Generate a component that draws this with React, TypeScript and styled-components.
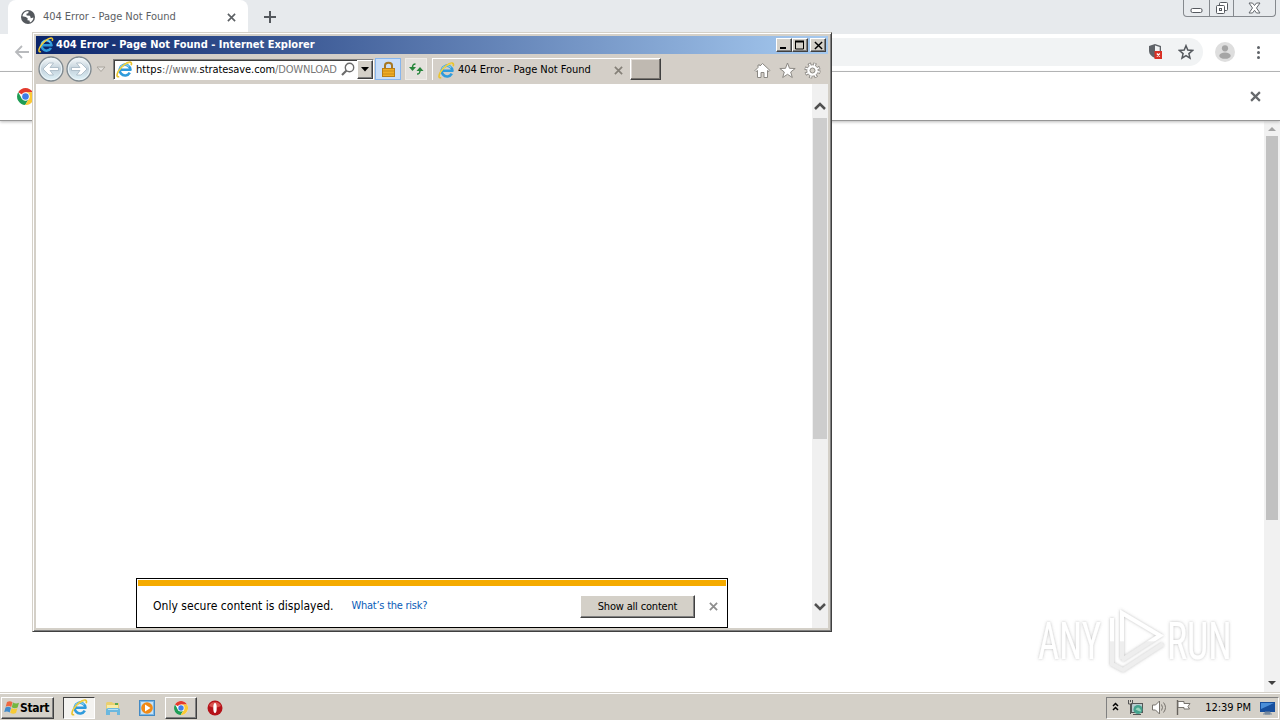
import type { ReactNode } from 'react';
import styled, { createGlobalStyle, css } from 'styled-components';

const GlobalStyle = createGlobalStyle`
  * {
    box-sizing: border-box;
  }

  body {
    margin: 0;
    overflow: hidden;
    font-family: 'DejaVu Sans Condensed', 'DejaVu Sans', sans-serif;
    font-stretch: condensed;
    font-size: 11px;
    color: #000;
  }

  svg {
    display: block;
    flex: none;
  }
`;

const raised = css`
  border: 1px solid;
  border-color: #fff #404040 #404040 #fff;
  box-shadow: inset -1px -1px 0 #808080;
`;

type TextProps = {
  size?: number;
  color?: string;
  spacing?: number;
  bold?: boolean;
};

const Text = styled.span.withConfig({
  shouldForwardProp: (prop) => !['size', 'color', 'spacing', 'bold'].includes(prop),
})<TextProps>`
  font-size: ${({ size = 11 }) => size}px;
  font-weight: ${({ bold }) => (bold ? 'bold' : 'normal')};
  letter-spacing: ${({ spacing = 0 }) => spacing}px;
  color: ${({ color = '#000' }) => color};
  line-height: 16px;
  white-space: nowrap;
`;

const Desktop = styled.div`
  position: relative;
  width: 1280px;
  height: 720px;
  display: flex;
  flex-direction: column;
  overflow: hidden;
  background: #fff;
`;

const Chrome = {
  Window: styled.main`
    flex: 1;
    display: flex;
    flex-direction: column;
    min-height: 0;
  `,
  TabStrip: styled.div`
    height: 34px;
    display: flex;
    align-items: flex-start;
    padding-left: 8px;
    background: #e7eaed;
  `,
  Tab: styled.div`
    width: 240px;
    height: 34px;
    display: flex;
    align-items: center;
    padding: 0 12px 0 13px;
    border-radius: 8px 8px 0 0;
    background: #fff;

    ${Text} {
      flex: 1;
      margin-left: 8px;
    }
  `,
  NewTab: styled.div`
    padding: 10px 15px;
  `,
  Controls: styled.div`
    width: 93px;
    height: 17px;
    display: flex;
    margin-left: auto;
    margin-right: 4px;
    border: 1px solid #85898e;
    border-top: 0;
    border-radius: 0 0 4px 4px;
  `,
  Control: styled.div<{ width: number }>`
    width: ${({ width }) => width}px;
    display: flex;
    align-items: center;
    justify-content: center;

    & + & {
      border-left: 1px solid #85898e;
    }
  `,
  Toolbar: styled.div`
    height: 38px;
    display: flex;
    align-items: center;
    padding: 0 14px 2px 14px;
    border-bottom: 1px solid #b0b1b3;
    background: #fff;
  `,
  Omnibox: styled.div`
    flex: 1;
    height: 28px;
    display: flex;
    align-items: center;
    justify-content: flex-end;
    gap: 15px;
    margin: 0 12px 0 80px;
    padding-right: 9px;
    border-radius: 14px;
    background: #f1f3f4;
  `,
  Avatar: styled.div`
    margin-right: 14px;
  `,
  InfoBar: styled.div`
    height: 49px;
    display: flex;
    align-items: center;
    justify-content: space-between;
    padding: 0 19px 0 17px;
    border-bottom: 1px solid #969696;
    box-shadow: 0 1px 3px #bbb;
    z-index: 1;
  `,
  Page: styled.div`
    flex: 1;
    display: flex;
    justify-content: flex-end;
    background: #fff;
  `,
  Scrollbar: styled.div`
    width: 16px;
    display: flex;
    flex-direction: column;
    align-items: center;
    padding: 5px 0 6px;
    background: #f1f1f1;
  `,
  Thumb: styled.div`
    width: 12px;
    height: 384px;
    margin: 5px 0 auto;
    background: #c1c1c1;
  `,
};

const Explorer = {
  Window: styled.section`
    position: absolute;
    left: 32px;
    top: 32px;
    width: 800px;
    height: 600px;
    display: flex;
    flex-direction: column;
    padding: 2px;
    border: 1px solid;
    border-color: #d4d0c8 #404040 #404040 #d4d0c8;
    box-shadow: inset 1px 1px 0 #fff, inset -1px -1px 0 #808080;
    background: #d4d0c8;
    z-index: 2;
  `,
  Frame: styled.div`
    flex: 1;
    display: flex;
    flex-direction: column;
    margin: 1px;
    min-height: 0;
  `,
  TitleBar: styled.header`
    height: 18px;
    display: flex;
    align-items: center;
    padding: 0 2px;
    background: linear-gradient(90deg, #0a246a, #a6caf0);

    ${Text} {
      flex: 1;
      margin-left: 2px;
    }
  `,
  TitleButton: styled.div<{ gap?: boolean }>`
    width: 16px;
    height: 14px;
    display: flex;
    align-items: center;
    justify-content: center;
    margin-left: ${({ gap }) => (gap ? 2 : 0)}px;
    background: #d4d0c8;
    ${raised}
  `,
  Toolbar: styled.div`
    height: 30px;
    display: flex;
    align-items: center;
    background: #d4cfc8;
  `,
  Navigation: styled.div`
    display: flex;
    align-items: center;
    padding-left: 1px;
  `,
  Address: styled.div`
    width: 261px;
    height: 21px;
    display: flex;
    align-items: center;
    margin-left: 6px;
    padding-left: 2px;
    border: 1px solid;
    border-color: #808080 #fff #fff #808080;
    box-shadow: inset 1px 1px 0 #404040;
    background: #fff;
  `,
  Url: styled.div`
    width: 202px;
    display: flex;
    margin-left: 3px;
    padding-top: 1px;
    overflow: hidden;
  `,
  Dropdown: styled.div`
    width: 16px;
    height: 19px;
    display: flex;
    align-items: center;
    justify-content: center;
    margin-left: auto;
    background: #d4d0c8;
    ${raised}
  `,
  Tool: styled.div<{ active?: boolean }>`
    width: ${({ active }) => (active ? 26 : 22)}px;
    height: 22px;
    display: flex;
    align-items: center;
    justify-content: center;
    margin-left: ${({ active }) => (active ? 1 : 4)}px;
    border: 1px solid ${({ active }) => (active ? '#86b5ee' : '#efece8')};
    background: ${({ active }) => (active ? '#c9def8' : '#e4e1dd')};
  `,
  Tab: styled.div`
    width: 198px;
    height: 22px;
    display: flex;
    align-items: center;
    margin-left: 5px;
    padding: 1px 7px 0 5px;
    border: 1px solid #fff;
    border-width: 1px 0 0 1px;

    ${Text} {
      flex: 1;
      margin-left: 3px;
    }
  `,
  NewTab: styled.div`
    width: 31px;
    height: 22px;
    border: 1px solid;
    border-color: #fff #404040 #404040 #fff;
    box-shadow: inset -1px -1px 0 #77736e, inset 1px 1px 0 #ded9d4;
    background: #bfb9b1;
  `,
  Commands: styled.div`
    display: flex;
    gap: 8px;
    margin-left: auto;
    padding: 3px 7px 0 0;
  `,
  Body: styled.div`
    flex: 1;
    display: flex;
    justify-content: flex-end;
    min-height: 0;
    background: #fff;
  `,
  Scrollbar: styled.div`
    width: 16px;
    display: flex;
    flex-direction: column;
    align-items: center;
    padding: 17px 0;
    background: #f0f0f0;
  `,
  Thumb: styled.div`
    width: 14px;
    height: 321px;
    margin: 8px 0 auto;
    background: #cdcdcd;
  `,
};

const Notice = {
  Bar: styled.aside`
    width: 592px;
    height: 50px;
    align-self: flex-end;
    display: flex;
    flex-direction: column;
    margin-right: 84px;
    padding: 1px;
    border: 1px solid #000;
    background: #fff;
  `,
  Stripe: styled.div`
    height: 6px;
    background: #f5ab00;
  `,
  Content: styled.div`
    flex: 1;
    display: flex;
    align-items: center;
    padding: 0 8px 0 15px;
  `,
  Link: styled.a`
    display: flex;
    margin-left: 18px;
  `,
  Button: styled.button`
    width: 115px;
    height: 23px;
    display: flex;
    align-items: center;
    justify-content: center;
    margin: 1px 14px 0 auto;
    padding: 1px 0 0;
    font: inherit;
    background: #d4d0c8;
    ${raised}
  `,
};

const Taskbar = {
  Bar: styled.footer`
    height: 28px;
    display: flex;
    align-items: center;
    padding-top: 2px;
    border-top: 1px solid #d4d0c8;
    box-shadow: inset 0 1px 0 #fff;
    background: #d4d0c8;
  `,
  Start: styled.div`
    width: 53px;
    height: 22px;
    display: flex;
    align-items: center;
    margin: 0 9px 0 1px;
    padding-left: 2px;
    ${raised}
  `,
  Item: styled.div<{ look?: 'pressed' | 'raised' }>`
    width: 32px;
    height: 22px;
    display: flex;
    align-items: center;
    justify-content: center;
    margin-right: 2px;
    ${({ look }) => look === 'raised' && raised}
    ${({ look }) =>
      look === 'pressed' &&
      css`
        border: 1px solid;
        border-color: #404040 #fff #fff #404040;
        background: #f4f3f0;
      `}
  `,
  Tray: styled.div`
    width: 173px;
    height: 22px;
    display: flex;
    align-items: center;
    margin: 0 1px 0 auto;
    padding: 0 2px 0 4px;
    border: 1px solid;
    border-color: #808080 #fff #fff #808080;
  `,
  TrayIcons: styled.div`
    display: flex;
    align-items: center;
    gap: 7px;
    margin-right: auto;
  `,
};

const Watermark = styled.div`
  position: absolute;
  left: 1032px;
  top: 604px;
  z-index: 3;
`;

type IconProps = {
  width: number;
  height?: number;
  box?: string;
  children: ReactNode;
};

const Icon = ({ width, height = width, box, children }: IconProps) => (
  <svg width={width} height={height} viewBox={box ?? `0 0 ${width} ${height}`} fill="none">
    {children}
  </svg>
);

const Cross = ({ size, color, weight = 2 }: { size: number; color: string; weight?: number }) => (
  <Icon width={size} box="0 0 10 10">
    <path d="M1 1l8 8M9 1l-8 8" stroke={color} strokeWidth={weight} />
  </Icon>
);

const IeLogo = ({ size = 17 }: { size?: number }) => (
  <Icon width={size} box="0 0 18 18">
    <path
      d="M14.6 12.4a5.700 5.700 0 1 1 .7-3.100H5.200"
      stroke="#2f9bdc"
      strokeWidth="2.800"
      strokeLinejoin="round"
    />
    <path d="M4 8.200A5.600 5.600 0 0 1 13.800 6" stroke="#7fd2f6" strokeWidth="1.200" />
    <path
      d="M3.400 16.400C.8 17.600.2 14.900 2.400 11 5.200 6 11.600.8 15 1.200c1.500.2 1.700 1.600 1 3.300"
      stroke="#e9c32c"
      strokeWidth="1.700"
    />
    <path d="M2.200 12C5 6.500 11 1.800 14.800 1.600" stroke="#fbe66a" strokeWidth=".6" />
  </Icon>
);

const ChromeLogo = ({ size }: { size: number }) => (
  <Icon width={size} box="0 0 16 16">
    <circle cx="8" cy="8" r="8" fill="#fff" />
    <path d="M8 8L1.1 4A8 8 0 0 1 14.9 4L8 4.2z" fill="#e33b2e" />
    <path d="M1.1 4A8 8 0 0 0 7.7 16L11.3 9.9 8 11.6 4.7 10z" fill="#1f9d55" />
    <path d="M14.9 4A8 8 0 0 1 7.7 16l3.6-6.1L11.5 6 8 4z" fill="#fbc934" />
    <circle cx="8" cy="8" r="4" fill="#fff" />
    <circle cx="8" cy="8" r="3.1" fill="#3f7ee8" />
  </Icon>
);

const NavArrow = ({ forward }: { forward?: boolean }) => (
  <Icon width={28} height={27}>
    <defs>
      <linearGradient id="orb" x2="0" y2="1">
        <stop stopColor="#fafcfd" />
        <stop offset=".5" stopColor="#c2d1db" />
        <stop offset="1" stopColor="#e2f5fb" />
      </linearGradient>
    </defs>
    <circle cx="14" cy="13" r="12" fill="url(#orb)" stroke="#7f898f" strokeWidth="1.3" />
    <circle cx="14" cy="13" r="10.7" stroke="#edf5f8" />
    <path
      transform={forward ? undefined : 'matrix(-1 0 0 1 28 0)'}
      d="M6.500 11.500h8.500l-3.500-4.500h4.500l6 6-6 6h-4.500l3.500-4.500h-8.500z"
      fill="#fff"
      stroke="#a3b5c1"
      strokeWidth=".8"
    />
  </Icon>
);

const ChromeWindow = () => (
  <Chrome.Window>
    <Chrome.TabStrip>
      <Chrome.Tab>
        <Icon width={14} box="0 0 16 16">
          <circle cx="8" cy="8" r="8" fill="#54585d" />
          <path d="M8.8 1.6l-.6 2-2.1.6.4 2.1 3.8.3.9 2.7 3-.7c-.2 2.6-1.6 4.8-4 5.6l-.5-2.2-2.300-.4.2-2.3-2.1-1.4L1.7 7c.5-3 3.2-5.9 7.1-5.4z" fill="#fff" />
        </Icon>
        <Text color="#5c6064" spacing={-0.04}>404 Error - Page Not Found</Text>
        <Cross size={9} color="#5c6064" weight={1.8} />
      </Chrome.Tab>
      <Chrome.NewTab>
        <Icon width={14}>
          <path d="M7 1v12M1 7h12" stroke="#54585d" strokeWidth="2" />
        </Icon>
      </Chrome.NewTab>
      <Chrome.Controls>
        <Chrome.Control width={25}>
          <Icon width={13} height={15}>
            <rect x="1" y="7.500" width="11" height="4" rx="1.5" fill="#fff" stroke="#55595f" />
          </Icon>
        </Chrome.Control>
        <Chrome.Control width={25}>
          <Icon width={14} height={14}>
            <rect x="4.5" y="1.5" width="8" height="8" rx="1" fill="#fff" stroke="#55595f" />
            <rect x="1.5" y="4.5" width="8" height="8" rx="1" fill="#fff" stroke="#55595f" />
            <rect x="4.5" y="7.5" width="2" height="2" stroke="#55595f" />
          </Icon>
        </Chrome.Control>
        <Chrome.Control width={42}>
          <Icon width={13} height={12}>
            <path d="M1 1h3.5l2 2.5 2-2.5H12L8.5 6l3.5 5H8.5l-2-2.7-2 2.7H1l3.5-5z" fill="#fff" stroke="#64686d" />
          </Icon>
        </Chrome.Control>
      </Chrome.Controls>
    </Chrome.TabStrip>

    <Chrome.Toolbar>
      <Icon width={16}>
        <path d="M15 8H2M8 2L2 8l6 6" stroke="#b8babd" strokeWidth="1.8" />
      </Icon>
      <Chrome.Omnibox>
        <Icon width={15} height={17}>
          <path d="M7 1l6 2v5c0 3-2.300 5.500-6 7-3.700-1.500-6-4-6-7V3z" fill="#5f6368" />
          <path d="M7 2.400l4.700 1.500V8H7z" fill="#f1f3f4" />
          <rect x="6.500" y="8" width="7.500" height="8" fill="#d93025" />
          <path d="M8.800 10.500l3 3m0-3l-3 3" stroke="#fff" strokeWidth="1.200" />
        </Icon>
        <Icon width={16}>
          <path
            d="M8 1.700l1.800 4.400 4.700.4-3.600 3.100 1.100 4.600L8 11.700l-4 2.500 1.100-4.600-3.600-3.100 4.700-.4z"
            stroke="#54585d"
            strokeWidth="1.500"
          />
        </Icon>
      </Chrome.Omnibox>
      <Chrome.Avatar>
        <Icon width={20}>
          <circle cx="10" cy="10" r="10" fill="#dedede" />
          <circle cx="10" cy="6.300" r="3.100" fill="#a5a5a5" />
          <ellipse cx="10" cy="13.700" rx="5.700" ry="3.100" fill="#a5a5a5" />
        </Icon>
      </Chrome.Avatar>
      <Icon width={17} height={16}>
        <circle cx="9.500" cy="3.500" r="1.500" fill="#5f6368" />
        <circle cx="9.500" cy="8.500" r="1.500" fill="#5f6368" />
        <circle cx="9.500" cy="13.500" r="1.500" fill="#5f6368" />
      </Icon>
    </Chrome.Toolbar>

    <Chrome.InfoBar>
      <ChromeLogo size={17} />
      <Cross size={11} color="#66696c" weight={2} />
    </Chrome.InfoBar>

    <Chrome.Page>
      <Chrome.Scrollbar>
        <Icon width={8} height={5}>
          <path d="M0 5l4-4 4 4z" fill="#a3a3a3" />
        </Icon>
        <Chrome.Thumb />
        <Icon width={8} height={5}>
          <path d="M0 0h8L4 4z" fill="#404040" />
        </Icon>
      </Chrome.Scrollbar>
    </Chrome.Page>
  </Chrome.Window>
);

const ExplorerToolbar = () => (
  <Explorer.Toolbar>
    <Explorer.Navigation>
      <NavArrow />
      <NavArrow forward />
      <Icon width={14} height={9}>
        <path d="M4 2h8L8 6.500z" fill="#e5e2de" stroke="#aaa59e" />
      </Icon>
    </Explorer.Navigation>
    <Explorer.Address>
      <IeLogo />
      <Explorer.Url>
        <Text color="#666" spacing={0.17}>
          <Text spacing={0.1}>https</Text>://www.
        </Text>
        <Text spacing={-0.08}>stratesave.com</Text>
        <Text color="#777" spacing={-0.15}>/DOWNLOAD</Text>
      </Explorer.Url>
      <Icon width={18} height={15}>
        <circle cx="11.500" cy="5.500" r="4.200" stroke="#6b6b6b" strokeWidth="1.400" />
        <path d="M8.500 8.500L4 13" stroke="#6b6b6b" strokeWidth="2.200" />
      </Icon>
      <Explorer.Dropdown>
        <Icon width={8} height={5}>
          <path d="M0 0h8L4 4.500z" fill="#000" />
        </Icon>
      </Explorer.Dropdown>
    </Explorer.Address>
    <Explorer.Tool active>
      <Icon width={15} height={17}>
        <path d="M4 8V4.500C4 .8 11 .8 11 4.500V8" stroke="#a77924" strokeWidth="2" />
        <rect x="1.500" y="7.500" width="12" height="8" fill="#f0ad25" stroke="#b87e16" />
        <path d="M2 10h11M2 13h11" stroke="#c98b1b" />
      </Icon>
    </Explorer.Tool>
    <Explorer.Tool>
      <Icon width={16}>
        <path d="M7.500 3C5 3 4.500 4 4.500 7" stroke="#26853a" strokeWidth="1.600" />
        <path d="M1 6h7l-3.500 4z" fill="#26853a" />
        <path d="M9 13c2.500 0 3-1 3-4" stroke="#26853a" strokeWidth="1.600" />
        <path d="M8.500 10h7L12 6z" fill="#26853a" />
      </Icon>
    </Explorer.Tool>
    <Explorer.Tab>
      <IeLogo />
      <Text spacing={-0.04}>404 Error - Page Not Found</Text>
      <Cross size={9} color="#858078" weight={1.900} />
    </Explorer.Tab>
    <Explorer.NewTab />
    <Explorer.Commands>
      <Icon width={17}>
        <path d="M8.500 1.500l7.500 7-1 1-1.500-1v7h-3.500v-5H7v5H3.500v-7l-1.500 1-1-1 3-3V3h2v1z" fill="#fff" stroke="#8b8883" />
      </Icon>
      <Icon width={17}>
        <path d="M8.500 1l2 5.300 5.700.2-4.500 3.500 1.600 5.500-4.800-3.200-4.800 3.200L5.300 10 .8 6.500l5.700-.2z" fill="#fff" stroke="#8b8883" />
      </Icon>
      <Icon width={17}>
        <circle cx="8.500" cy="8.500" r="6.300" stroke="#8b8883" strokeWidth="3.600" strokeDasharray="2.900 2.048" />
        <circle cx="8.500" cy="8.500" r="5.700" fill="#fff" stroke="#8b8883" strokeWidth=".9" />
        <circle cx="8.500" cy="8.500" r="6.100" stroke="#fff" strokeWidth="2.600" strokeDasharray="1.300 3.491" strokeDashoffset="-.75" />
        <circle cx="8.500" cy="8.500" r="2.500" fill="#d4d0c8" stroke="#8b8883" />
      </Icon>
    </Explorer.Commands>
  </Explorer.Toolbar>
);

const ExplorerWindow = () => (
  <Explorer.Window>
    <Explorer.Frame>
      <Explorer.TitleBar>
        <IeLogo size={16} />
        <Text bold color="#fff">
          404 Error - Page Not Found - Internet Explorer
        </Text>
        <Explorer.TitleButton>
          <Icon width={10} height={10}>
            <path d="M1 8h6" stroke="#000" strokeWidth="2" />
          </Icon>
        </Explorer.TitleButton>
        <Explorer.TitleButton>
          <Icon width={10} height={10}>
            <path d="M.5 1v8h8V1" stroke="#000" />
            <path d="M0 1.500h9" stroke="#000" strokeWidth="2" />
          </Icon>
        </Explorer.TitleButton>
        <Explorer.TitleButton gap>
          <Cross size={9} color="#000" weight={1.600} />
        </Explorer.TitleButton>
      </Explorer.TitleBar>
      <ExplorerToolbar />
      <Explorer.Body>
        <Notice.Bar>
          <Notice.Stripe />
          <Notice.Content>
            <Text size={12} spacing={0.03}>Only secure content is displayed.</Text>
            <Notice.Link>
              <Text color="#0a5cb8" spacing={-0.26}>What’s the risk?</Text>
            </Notice.Link>
            <Notice.Button>
              <Text spacing={-0.18}>Show all content</Text>
            </Notice.Button>
            <Cross size={9} color="#8e8e8e" weight={2} />
          </Notice.Content>
        </Notice.Bar>
        <Explorer.Scrollbar>
          <Icon width={12} height={9}>
            <path d="M1 8l5-5 5 5" stroke="#505050" strokeWidth="2.500" />
          </Icon>
          <Explorer.Thumb />
          <Icon width={12} height={9}>
            <path d="M1 2l5 5 5-5" stroke="#505050" strokeWidth="2.500" />
          </Icon>
        </Explorer.Scrollbar>
      </Explorer.Body>
    </Explorer.Frame>
  </Explorer.Window>
);

const DesktopTaskbar = () => (
  <Taskbar.Bar>
    <Taskbar.Start>
      <Icon width={16} height={15}>
        <path d="M3 2q3-1.800 5.500.2L7.200 7Q4.700 5.200 1.700 6.700z" fill="#ed6840" />
        <path d="M9 2.500q3 1.700 6 .2l-1.400 4.800q-3 1.500-5.800-.2z" fill="#74b73f" />
        <path d="M1.500 7.500q3-1.500 5.500.2l-1.300 4.800q-2.500-2-5.500-.4z" fill="#408bcc" />
        <path d="M7.600 8q2.800 1.700 5.800.2L12 13q-3 1.500-5.800-.2z" fill="#f7ca35" />
      </Icon>
      <Text bold size={12} spacing={-0.3}>Start</Text>
    </Taskbar.Start>
    <Taskbar.Item look="pressed">
      <IeLogo />
    </Taskbar.Item>
    <Taskbar.Item>
      <Icon width={16}>
        <path d="M1 3l1-1h5l1 1h6v9H1z" fill="#e9cf70" />
        <path d="M2 5h11v7H2z" fill="#f8eba5" />
        <path d="M10 3h3v2h-3z" fill="#58a852" />
        <path d="M1 9l2-1h10l2 1v6h-3v-3H5v3H1z" fill="#6bb8df" />
        <path d="M3 9.500h10" stroke="#b7e2f3" />
      </Icon>
    </Taskbar.Item>
    <Taskbar.Item>
      <Icon width={16}>
        <rect x=".5" y=".5" width="15" height="15" fill="#7bb7e6" stroke="#438ac4" />
        <rect x="2" y="2" width="12" height="12" fill="#c6e3f7" />
        <circle cx="8" cy="8" r="5.800" fill="#f18a16" />
        <path d="M6 4.500l5.500 3.500L6 11.500z" fill="#fff" />
      </Icon>
    </Taskbar.Item>
    <Taskbar.Item look="raised">
      <ChromeLogo size={14} />
    </Taskbar.Item>
    <Taskbar.Item>
      <Icon width={16}>
        <circle cx="8" cy="8" r="7.500" fill="#b51219" />
        <path d="M2 6a6.500 6.500 0 0 1 12 0q-6 3-12 0z" fill="#d9534f" />
        <ellipse cx="8" cy="8" rx="1.700" ry="5" fill="#fff" />
      </Icon>
    </Taskbar.Item>
    <Taskbar.Tray>
      <Taskbar.TrayIcons>
        <Icon width={9} height={13}>
          <path d="M2 5l2.500-2.500L7 5M2 9l2.500-2.500L7 9" stroke="#000" strokeWidth="1.500" />
        </Icon>
        <Icon width={17}>
          <rect x="4.500" y="4.500" width="11" height="9" fill="#b8ccd0" stroke="#555" />
          <path d="M6 15.500h8" stroke="#555" />
          <path d="M1.500 1v4h4V1M3.500 1v2M3.500 5v10" stroke="#555" />
          <circle cx="11" cy="10.500" r="4.500" fill="#45a28d" />
          <path d="M8.500 10.500q2.500-4 5 0t-5 0" fill="#98d4bd" />
        </Icon>
        <Icon width={17}>
          <path d="M1.500 6v5h3l4 4V2l-4 4z" fill="#fff" stroke="#77736d" />
          <path d="M10.500 5.500q2 3 0 6M12.500 3.500q4 5 0 10" stroke="#77736d" />
        </Icon>
        <Icon width={17}>
          <path d="M2.500 1v15" stroke="#66625d" strokeWidth="1.400" />
          <path d="M3 2.500h6v2h6l-2 3 1.500 2.500H9V8.500H3z" fill="#fff" stroke="#77736d" />
        </Icon>
      </Taskbar.TrayIcons>
      <Text spacing={-0.05}>12:39 PM</Text>
      <Icon width={25} height={16}>
        <rect x="9" y="2" width="15" height="10" fill="#174f9d" />
        <path d="M10 3h13L10 9z" fill="#4a8ed8" />
        <path d="M14 12h5v2h-5zM12 14h9" fill="#77899d" stroke="#77899d" />
      </Icon>
    </Taskbar.Tray>
  </Taskbar.Bar>
);

const WatermarkLabel = styled.text`
  font-family: 'Roboto', 'Liberation Sans', sans-serif;
  font-size: 52px;
  line-height: 60px;
`;

const App = () => (
  <Desktop>
    <GlobalStyle />
    <ChromeWindow />
    <ExplorerWindow />
    <DesktopTaskbar />
    <Watermark>
      <svg width="212" height="76" viewBox="0 0 212 76" fill="none">
        <defs>
          <linearGradient id="fade" x1="0" y1="0" x2="0" y2="76" gradientUnits="userSpaceOnUse">
            <stop offset=".48" stopColor="#fff" />
            <stop offset=".5" stopColor="#eee" />
          </linearGradient>
          <filter id="halo" x="-10%" y="-10%" width="120%" height="120%">
            <feDropShadow dx="0" dy="0" stdDeviation="1.500" floodColor="#777" floodOpacity=".5" />
          </filter>
        </defs>
        <g filter="url(#halo)" fill="url(#fade)">
          <g transform="translate(6 55) scale(.6 1)">
            <WatermarkLabel textLength="105" lengthAdjust="spacingAndGlyphs">ANY</WatermarkLabel>
          </g>
          <g transform="translate(135 55) scale(.6 1)">
            <WatermarkLabel textLength="108" lengthAdjust="spacingAndGlyphs">RUN</WatermarkLabel>
          </g>
          <g fill="none" stroke="url(#fade)" strokeWidth="4">
            <path d="M90 55V9l38 22.500L90 56M80 14v46l11 6 40-26" />
          </g>
        </g>
      </svg>
    </Watermark>
  </Desktop>
);

export default App;
